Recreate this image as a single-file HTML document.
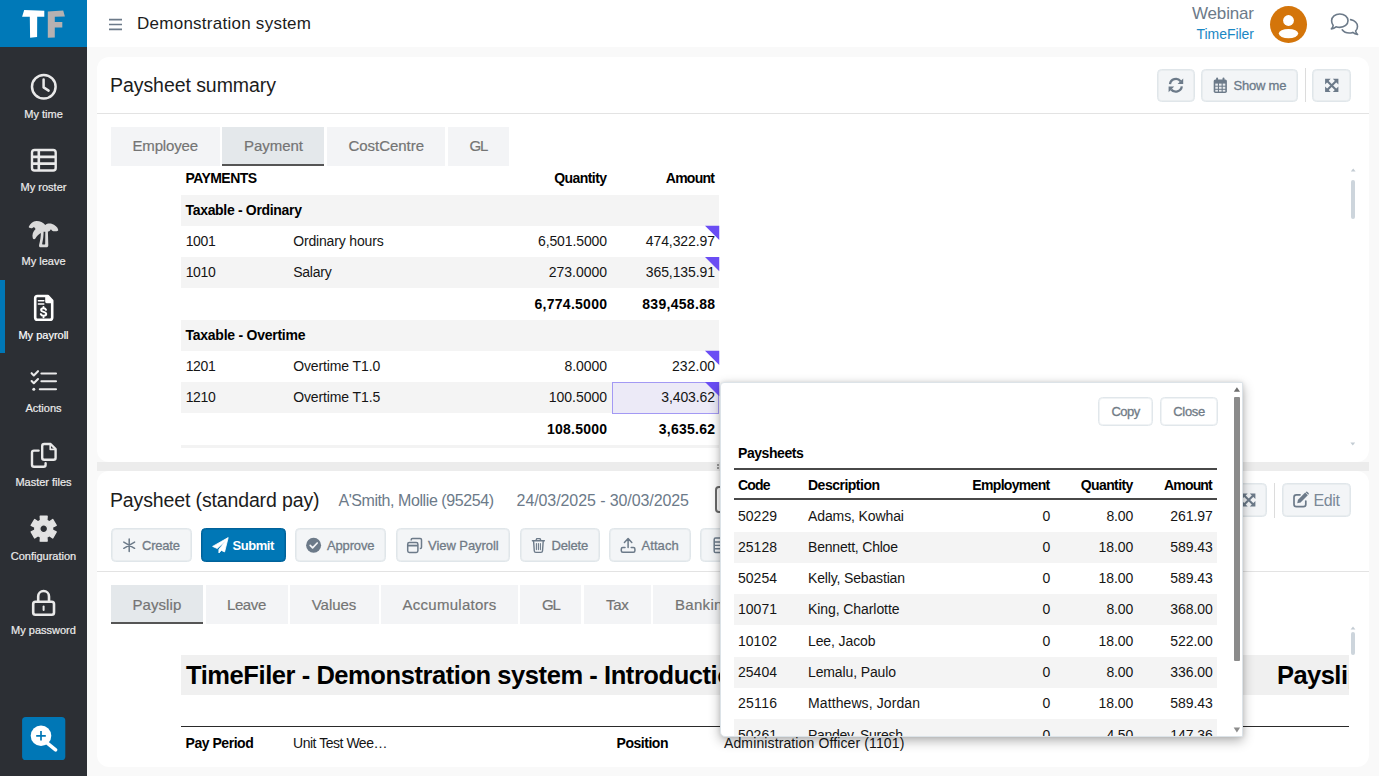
<!DOCTYPE html>
<html>
<head>
<meta charset="utf-8">
<title>TimeFiler</title>
<style>
*{box-sizing:border-box;margin:0;padding:0}
html,body{width:1379px;height:776px;overflow:hidden;background:#f9f9f9;font-family:"Liberation Sans",sans-serif;color:#111}
.abs{position:absolute}
.t{position:absolute;white-space:nowrap;line-height:1}
#side{position:absolute;left:0;top:0;width:87px;height:776px;background:#2c2f34}
#logo{position:absolute;left:0;top:0;width:87px;height:47px;background:#0079b8}
.nl{position:absolute;left:0;width:87px;text-align:center;font-size:11px;line-height:12px;color:#ececec;white-space:nowrap;-webkit-text-stroke:0.2px currentColor}
#top{position:absolute;left:87px;top:0;width:1292px;height:47px;background:#fff}
.panel{position:absolute;background:#fff;border-radius:12px}
.tab{position:absolute;background:#f3f4f6;height:38.75px}
.tab.on{background:#e4e8eb;border-bottom:2px solid #555}
.btn{position:absolute;border:1px solid #e0e6ea;background:#f3f5f7;border-radius:4.5px;box-shadow:inset 0 0 0 1px rgba(224,230,234,.55)}
.btn.pri{background:#0077b6;border-color:#00629a;box-shadow:inset 0 0 0 1px rgba(0,98,154,.5)}
</style>
</head>
<body>
<div id="side">
 <div id="logo"></div>
 <div class="abs" style="left:0;top:279.5px;width:5.3px;height:73px;background:#0077b6"></div>
 <svg class="abs" style="left:0;top:0" width="87" height="776" viewBox="0 0 87 776">
  <!-- TF logo -->
  <path d="M24.2 9.9 L44.3 10.8 L44.3 16.7 L37.2 16.7 L37.1 37.1 L30.1 37.8 L29.8 16.7 L22.1 16.7 Z" fill="#fff"/>
  <path d="M47.8 11.4 L63.2 10.5 L64.9 16.6 L54.8 16.7 L54.8 22 L62.3 22 L62.3 27.5 L54.8 27.5 L54.8 37.4 L47.8 37.7 Z" fill="#b6b1b1"/>
  <!-- clock -->
  <g fill="none" stroke="#e9e9e9" stroke-width="2.5" stroke-linecap="round" stroke-linejoin="round">
   <circle cx="43.8" cy="86.8" r="11.8"/>
   <path d="M43.6 79.6 V87.4 L48.6 90.6"/>
  </g>
  <!-- table list -->
  <g fill="none" stroke="#e9e9e9" stroke-width="2.4" stroke-linejoin="round">
   <rect x="32" y="150" width="23.7" height="20.5" rx="2.6"/>
   <path d="M32 156.9 H55.7 M32 163.6 H55.7 M38.8 150 V170.5" stroke-width="2.6"/>
  </g>
  <!-- palm -->
  <path fill="#dadada" fill-rule="evenodd" d="M28.9 226.6 C30.2 223.6 33 221.2 36.2 221 C39.6 220.8 43 222.4 45.3 224.9 C47 223.6 49.4 223.2 51.6 223.8 C55 224.8 57.6 227.2 58.2 229.8 C58.4 230.8 57.6 231.2 56.6 231.2 L53.4 231.2 C52.4 231.2 52 230.6 51.6 230 L50.9 229.2 L50 230.4 C49.4 231.2 48.8 231.5 47.9 231.5 L48.3 244.9 C48.4 246.4 47.6 247.3 46.2 247.3 L40.8 247.3 C39.4 247.3 38.8 246.2 39.1 244.9 C40.2 240.6 40.8 236.8 40.9 233 C38.8 234 36.8 236 35.4 238.4 C34.8 239.4 33.2 239.4 32.8 238.2 C31.8 235 33 231.2 35.6 229 L34 227 L32.4 228 C31.8 228.4 31 228.2 30.4 228 L29.4 227.8 C28.8 227.6 28.6 227.2 28.9 226.6 Z M43.6 231.8 C43.6 236 43 240 42.2 243.6 C42.1 244.2 42.4 244.6 43 244.6 L44.4 244.6 C45 244.6 45.2 244.2 45.2 243.6 L45.3 231.8 Z"/>
  <!-- file invoice dollar -->
  <path d="M37.4 296 H47.8 L52.2 300.6 V317.4 Q52.2 319.7 49.9 319.7 H37.4 Q35.2 319.7 35.2 317.4 V298.3 Q35.2 296 37.4 296 Z" fill="none" stroke="#fff" stroke-width="2.6" stroke-linejoin="round"/>
  <path d="M45.2 296 H48 L52.2 300.4 V303.2 H46.6 Q45.2 303.2 45.2 301.8 Z" fill="#fff"/>
  <path d="M38.4 300.7 H43.8 M38.4 304 H43.8" stroke="#fff" stroke-width="1.5" fill="none" stroke-linecap="round"/>
  <path d="M46 309.8 C45.6 308.8 44.7 308.3 43.5 308.3 C42.1 308.3 41.1 309 41.1 310.1 C41.1 312.5 46.2 311.3 46.2 314 C46.2 315.1 45.1 315.8 43.6 315.8 C42.2 315.8 41.2 315.2 40.8 314.1 M43.5 306.9 V308.3 M43.5 315.8 V317.2" stroke="#fff" stroke-width="2" fill="none" stroke-linecap="round"/>
  <!-- list check -->
  <g fill="none" stroke="#e9e9e9" stroke-width="2.1" stroke-linecap="round" stroke-linejoin="round">
   <path d="M41.4 373.5 H56 M41.4 381.3 H56 M39.8 389.2 H56"/>
   <path d="M31.6 373.2 L33.8 375.4 L38 371.2 M31.6 381 L33.8 383.2 L38 379"/>
  </g>
  <circle cx="33.8" cy="389.2" r="1.5" fill="#e9e9e9"/>
  <!-- copy -->
  <g fill="none" stroke="#e9e9e9" stroke-width="2.4" stroke-linejoin="round" stroke-linecap="round">
   <path d="M44.2 444 H50.6 L55.6 449 V457.8 Q55.6 459.8 53.6 459.8 H44.2 Q42.2 459.8 42.2 457.8 V446 Q42.2 444 44.2 444 Z"/>
   <path d="M50.2 444.4 V449.4 H55.2" stroke-width="1.6"/>
   <path d="M45.6 463.2 V464.8 Q45.6 466.8 43.6 466.8 H34 Q32 466.8 32 464.8 V452.6 Q32 450.6 34 450.6 H38.6"/>
  </g>
  <!-- gear -->
  <path fill="#e2e2e2" fill-rule="evenodd" stroke="#e2e2e2" stroke-width="1.4" stroke-linejoin="round" d="M40.53 520.28 L40.26 516.27 L47.14 516.27 L46.87 520.28 L49.41 521.74 L52.75 519.50 L56.19 525.46 L52.58 527.23 L52.58 530.17 L56.19 531.94 L52.75 537.90 L49.41 535.66 L46.87 537.12 L47.14 541.13 L40.26 541.13 L40.53 537.12 L37.99 535.66 L34.65 537.90 L31.21 531.94 L34.82 530.17 L34.82 527.23 L31.21 525.46 L34.65 519.50 L37.99 521.74 Z M39.80 528.70 a3.90 3.90 0 1 0 7.80 0 a3.90 3.90 0 1 0 -7.80 0 Z"/>
  <!-- lock -->
  <g fill="none" stroke="#e9e9e9" stroke-width="2.6" stroke-linejoin="round" stroke-linecap="round">
   <rect x="33.2" y="601.8" width="20.8" height="13" rx="2.2"/>
   <path d="M38.2 601.4 V596.4 A5.4 5.4 0 0 1 49 596.4 V601.4"/>
  </g>
  <path d="M43.6 606.6 V610" stroke="#e9e9e9" stroke-width="2" stroke-linecap="round"/>
  <!-- zoom button -->
  <rect x="22.1" y="716.9" width="43.2" height="43.1" rx="3.6" fill="#0077b6"/>
  <circle cx="41" cy="735.8" r="10.3" fill="#fff"/>
  <path d="M47.3 743.2 L55.6 749.8" stroke="#fff" stroke-width="3.6" stroke-linecap="round"/>
  <path d="M36.2 735.8 H45.8 M41 731 V740.6" stroke="#0077b6" stroke-width="1.7"/>
 </svg>
 <div class="nl" style="top:107.5px">My time</div>
 <div class="nl" style="top:181.3px">My roster</div>
 <div class="nl" style="top:255px">My leave</div>
 <div class="nl" style="top:328.8px;color:#fff">My payroll</div>
 <div class="nl" style="top:402.4px">Actions</div>
 <div class="nl" style="top:476.2px">Master files</div>
 <div class="nl" style="top:549.8px">Configuration</div>
 <div class="nl" style="top:623.6px">My password</div>
</div>
<div id="top"></div>
<svg class="abs" style="left:105px;top:14px" width="22" height="20" viewBox="105 14 22 20"><path d="M109 19.6 H122 M109 24.5 H122 M109 29.4 H122" stroke="#6c7a89" stroke-width="1.7" fill="none"/></svg>
<div class="t" id="t1" style="font-size:17px;top:15px;color:#1c1c1c;letter-spacing:0.257px;left:137.00px;">Demonstration system</div>
<div class="t" id="t2" style="font-size:17px;top:5px;color:#6c7a89;letter-spacing:-0.167px;right:125.17px;">Webinar</div>
<div class="t" id="t3" style="font-size:14px;top:27px;color:#1a87c4;letter-spacing:-0.027px;right:125.03px;">TimeFiler</div>
<svg class="abs" style="left:1265px;top:2px" width="110" height="44" viewBox="1265 2 110 44">
 <circle cx="1288.5" cy="24.5" r="18.5" fill="#d4750a"/>
 <circle cx="1288.5" cy="20.5" r="5.4" fill="#fff"/>
 <ellipse cx="1288.5" cy="33.6" rx="9.7" ry="4.7" fill="#fff"/>
 <g fill="none" stroke="#6c7a89" stroke-width="1.6" stroke-linejoin="round" stroke-linecap="round">
  <path d="M1339.8 14 C1344.4 14 1348 17 1348 20.7 C1348 24.4 1344.4 27.4 1339.8 27.4 C1338.4 27.4 1337.2 27.2 1336 26.8 C1334.8 27.9 1333.2 28.7 1331.4 28.9 C1332.4 27.9 1333 26.7 1333.2 25.4 C1332.2 24.1 1331.6 22.5 1331.6 20.7 C1331.6 17 1335.2 14 1339.8 14 Z"/>
  <path d="M1350.6 19.6 C1354.6 20.4 1357.5 23.2 1357.5 26.4 C1357.5 28.2 1356.8 29.8 1355.6 31 C1355.8 32.3 1356.5 33.5 1357.6 34.5 C1355.6 34.3 1354 33.5 1352.8 32.4 C1351.6 32.8 1350.4 33 1349.2 33 C1346.2 33 1343.6 31.7 1342.2 29.8"/>
 </g>
</svg>
<div class="panel" style="left:97px;top:57px;width:1272px;height:405px"></div>
<div class="t" id="t4" style="font-size:19.5px;top:76px;color:#1c1c1c;letter-spacing:-0.060px;left:110.00px;">Paysheet summary</div>
<div class="abs" style="left:97.00px;top:113.00px;width:1272.00px;height:1.00px;background:#e3e3e3;"></div>
<div class="btn" style="left:1157px;top:68.5px;width:37.5px;height:33px"></div>
<div class="btn" style="left:1201px;top:68.5px;width:96.7px;height:33px"></div>
<div class="abs" style="left:1305.00px;top:68.00px;width:1.00px;height:34.00px;background:#dcdcdc;"></div>
<div class="btn" style="left:1312px;top:68.5px;width:38.7px;height:33px"></div>
<div class="t" id="t5" style="font-size:13px;top:79px;color:#6c7a89;-webkit-text-stroke:0.3px #6c7a89;letter-spacing:-0.234px;left:1233.60px;">Show me</div>
<svg class="abs" style="left:1157px;top:68px" width="200" height="34" viewBox="1157 68 200 34">
 <!-- refresh -->
 <g fill="none" stroke="#6c7a89" stroke-width="2.3">
  <path d="M1170 84.2 A6 6 0 0 1 1180.6 81.2"/>
  <path d="M1181.8 86.4 A6 6 0 0 1 1171.2 89.4"/>
 </g>
 <path d="M1183.2 78.4 V84 H1177.6 Z M1168.6 92.2 V86.6 H1174.2 Z" fill="#6c7a89"/>
 <!-- calendar -->
 <path d="M1215.4 79.4 H1225.2 Q1226.9 79.4 1226.9 81.1 V91.2 Q1226.9 92.9 1225.2 92.9 H1215.4 Q1213.7 92.9 1213.7 91.2 V81.1 Q1213.7 79.4 1215.4 79.4 Z" fill="#6c7a89"/>
 <path d="M1217.1 78.5 V80.4 M1223.5 78.5 V80.4" stroke="#6c7a89" stroke-width="2" stroke-linecap="round"/>
 <g fill="#e9ecef">
  <rect x="1215.3" y="83.6" width="2.6" height="2.1"/><rect x="1219" y="83.6" width="2.6" height="2.1"/><rect x="1222.7" y="83.6" width="2.6" height="2.1"/>
  <rect x="1215.3" y="86.7" width="2.6" height="2.1"/><rect x="1219" y="86.7" width="2.6" height="2.1"/><rect x="1222.7" y="86.7" width="2.6" height="2.1"/>
  <rect x="1215.3" y="89.8" width="2.6" height="1.8"/><rect x="1219" y="89.8" width="2.6" height="1.8"/><rect x="1222.7" y="89.8" width="2.6" height="1.8"/>
 </g>
 <!-- expand -->
 <g stroke="#6c7a89" stroke-width="2.1" fill="none">
  <path d="M1327.2 80.9 L1336.2 89.9 M1336.2 80.9 L1327.2 89.9"/>
 </g>
 <path d="M1325.1 78.8 H1330.7 L1325.1 84.4 Z M1338.4 78.8 V84.4 L1332.8 78.8 Z M1325.1 92 V86.4 L1330.7 92 Z M1338.4 92 H1332.8 L1338.4 86.4 Z" fill="#6c7a89"/>
</svg>
<div class="tab" style="left:111.00px;top:127.00px;width:109.00px"></div>
<div class="t" id="t6" style="font-size:15px;top:138px;color:#747474;letter-spacing:-0.172px;left:132.50px;-webkit-text-stroke:0.2px #747474;">Employee</div>
<div class="tab on" style="left:222.00px;top:127.00px;width:102.25px"></div>
<div class="t" id="t7" style="font-size:15px;top:138px;color:#747474;letter-spacing:-0.034px;left:244.00px;-webkit-text-stroke:0.2px #747474;">Payment</div>
<div class="tab" style="left:326.50px;top:127.00px;width:118.50px"></div>
<div class="t" id="t8" style="font-size:15px;top:138px;color:#747474;letter-spacing:-0.042px;left:348.50px;-webkit-text-stroke:0.2px #747474;">CostCentre</div>
<div class="tab" style="left:447.50px;top:127.00px;width:61.75px"></div>
<div class="t" id="t9" style="font-size:15px;top:138px;color:#747474;letter-spacing:-1.200px;left:469.50px;-webkit-text-stroke:0.2px #747474;">GL</div>
<div class="abs" style="left:181.00px;top:194.50px;width:538.25px;height:31.25px;background:#f4f4f4;"></div>
<div class="abs" style="left:181.00px;top:257.00px;width:538.25px;height:31.25px;background:#f4f4f4;"></div>
<div class="abs" style="left:181.00px;top:319.50px;width:538.25px;height:31.25px;background:#f4f4f4;"></div>
<div class="abs" style="left:181.00px;top:382.00px;width:538.25px;height:31.25px;background:#f4f4f4;"></div>
<div class="abs" style="left:181.00px;top:445.00px;width:538.25px;height:3.00px;background:#f3f3f3;"></div>
<div class="abs" style="left:611.75px;top:382.25px;width:107.50px;height:31.50px;background:#eceaf7;border:1px solid #a399f4;"></div>
<svg class="abs" style="left:0;top:0" width="1379" height="776" viewBox="0 0 1379 776"><g fill="#6a4df4"><path d="M705 225.75 H719.25 V240.00 Z"/><path d="M705 257.00 H719.25 V271.25 Z"/><path d="M705 350.75 H719.25 V365.00 Z"/><path d="M705 382.00 H719.25 V396.25 Z"/></g></svg>
<div class="t" id="t10" style="font-size:14px;top:171px;color:#000;font-weight:bold;letter-spacing:-0.567px;left:185.50px;">PAYMENTS</div>
<div class="t" id="t11" style="font-size:14px;top:171px;color:#000;font-weight:bold;letter-spacing:-0.576px;right:772.58px;">Quantity</div>
<div class="t" id="t12" style="font-size:14px;top:171px;color:#000;font-weight:bold;letter-spacing:-0.728px;right:664.73px;">Amount</div>
<div class="t" id="t13" style="font-size:14px;top:203px;color:#000;font-weight:bold;letter-spacing:-0.318px;left:185.50px;">Taxable - Ordinary</div>
<div class="t" id="t14" style="font-size:14px;top:234px;color:#151515;letter-spacing:-0.385px;left:185.70px;">1001</div>
<div class="t" id="t15" style="font-size:14px;top:234px;color:#151515;letter-spacing:-0.161px;left:293.20px;">Ordinary hours</div>
<div class="t" id="t16" style="font-size:14px;top:234px;color:#151515;letter-spacing:-0.120px;right:772.12px;">6,501.5000</div>
<div class="t" id="t17" style="font-size:14px;top:234px;color:#151515;letter-spacing:-0.092px;right:664.09px;">474,322.97</div>
<div class="t" id="t18" style="font-size:14px;top:265px;color:#151515;letter-spacing:-0.385px;left:185.70px;">1010</div>
<div class="t" id="t19" style="font-size:14px;top:265px;color:#151515;letter-spacing:-0.237px;left:293.20px;">Salary</div>
<div class="t" id="t20" style="font-size:14px;top:265px;color:#151515;letter-spacing:-0.022px;right:772.02px;">273.0000</div>
<div class="t" id="t21" style="font-size:14px;top:265px;color:#151515;letter-spacing:-0.092px;right:664.09px;">365,135.91</div>
<div class="t" id="t22" style="font-size:14px;top:297px;color:#000;font-weight:bold;letter-spacing:0.269px;right:771.73px;">6,774.5000</div>
<div class="t" id="t23" style="font-size:14px;top:297px;color:#000;font-weight:bold;letter-spacing:0.297px;right:663.70px;">839,458.88</div>
<div class="t" id="t24" style="font-size:14px;top:328px;color:#000;font-weight:bold;letter-spacing:-0.250px;left:185.50px;">Taxable - Overtime</div>
<div class="t" id="t25" style="font-size:14px;top:359px;color:#151515;letter-spacing:-0.385px;left:185.70px;">1201</div>
<div class="t" id="t26" style="font-size:14px;top:359px;color:#151515;letter-spacing:-0.120px;left:293.20px;">Overtime T1.0</div>
<div class="t" id="t27" style="font-size:14px;top:359px;color:#151515;letter-spacing:-0.066px;right:772.07px;">8.0000</div>
<div class="t" id="t28" style="font-size:14px;top:359px;color:#151515;letter-spacing:0.034px;right:663.97px;">232.00</div>
<div class="t" id="t29" style="font-size:14px;top:390px;color:#151515;letter-spacing:-0.385px;left:185.70px;">1210</div>
<div class="t" id="t30" style="font-size:14px;top:390px;color:#151515;letter-spacing:-0.120px;left:293.20px;">Overtime T1.5</div>
<div class="t" id="t31" style="font-size:14px;top:390px;color:#151515;letter-spacing:-0.022px;right:772.02px;">100.5000</div>
<div class="t" id="t32" style="font-size:14px;top:390px;color:#151515;letter-spacing:-0.107px;right:664.11px;">3,403.62</div>
<div class="t" id="t33" style="font-size:14px;top:422px;color:#000;font-weight:bold;letter-spacing:0.228px;right:771.77px;">108.5000</div>
<div class="t" id="t34" style="font-size:14px;top:422px;color:#000;font-weight:bold;letter-spacing:0.250px;right:663.75px;">3,635.62</div>
<div class="abs" style="left:1351.00px;top:180.00px;width:4.00px;height:39.00px;background:#cdd5dc;border-radius:2px;"></div>
<svg class="abs" style="left:1348px;top:166px" width="10" height="284" viewBox="1348 166 10 284"><path d="M1350.8 171.6 L1353.2 168.6 L1355.6 171.6 Z M1350.4 442.4 L1352.8 445.6 L1355.2 442.4 Z" fill="#c3ccd3"/></svg>
<div class="abs" style="left:97.00px;top:462.00px;width:1272.00px;height:8.75px;background:#ececec;"></div>
<div class="abs" style="left:717.00px;top:464.00px;width:2.00px;height:1.50px;background:#9a9a9a;"></div>
<div class="abs" style="left:717.00px;top:467.00px;width:2.00px;height:1.50px;background:#9a9a9a;"></div>
<div class="panel" style="left:97px;top:470.75px;width:1272px;height:296.4px"></div>
<div class="t" id="t35" style="font-size:19.5px;top:491px;color:#1c1c1c;letter-spacing:-0.134px;left:110.00px;">Paysheet (standard pay)</div>
<div class="t" id="t36" style="font-size:16px;top:493px;color:#6c7a89;letter-spacing:-0.423px;left:338.40px;">A&#x27;Smith, Mollie (95254)</div>
<div class="t" id="t37" style="font-size:16px;top:493px;color:#6c7a89;letter-spacing:-0.090px;left:516.60px;">24/03/2025 - 30/03/2025</div>
<div class="abs" style="left:714.5px;top:486px;width:30px;height:27px;border:2px solid #6a6a6a;border-radius:4px"></div>
<div class="btn" style="left:110.50px;top:528.25px;width:81.25px;height:33.75px"></div>
<div class="btn pri" style="left:201.00px;top:528.25px;width:84.75px;height:33.75px"></div>
<div class="btn" style="left:294.50px;top:528.25px;width:91.75px;height:33.75px"></div>
<div class="btn" style="left:395.50px;top:528.25px;width:114.50px;height:33.75px"></div>
<div class="btn" style="left:519.80px;top:528.25px;width:80.20px;height:33.75px"></div>
<div class="btn" style="left:608.80px;top:528.25px;width:81.80px;height:33.75px"></div>
<div class="btn" style="left:699.50px;top:528.25px;width:80.50px;height:33.75px"></div>
<div class="btn" style="left:1230.00px;top:483.00px;width:36.50px;height:33.75px"></div>
<div class="abs" style="left:1274.00px;top:482.50px;width:1.00px;height:35.00px;background:#dcdcdc;"></div>
<div class="btn" style="left:1281.50px;top:483.00px;width:69.00px;height:33.75px"></div>
<div class="t" id="t38" style="font-size:13px;top:539px;color:#717b86;-webkit-text-stroke:0.3px #717b86;letter-spacing:-0.206px;left:142.00px;">Create</div>
<div class="t" id="t39" style="font-size:13px;top:539px;color:#fff;font-weight:bold;letter-spacing:-0.463px;left:232.50px;">Submit</div>
<div class="t" id="t40" style="font-size:13px;top:539px;color:#717b86;-webkit-text-stroke:0.3px #717b86;letter-spacing:-0.154px;left:327.00px;">Approve</div>
<div class="t" id="t41" style="font-size:13px;top:539px;color:#717b86;-webkit-text-stroke:0.3px #717b86;letter-spacing:-0.054px;left:428.00px;">View Payroll</div>
<div class="t" id="t42" style="font-size:13px;top:539px;color:#717b86;-webkit-text-stroke:0.3px #717b86;letter-spacing:-0.176px;left:551.50px;">Delete</div>
<div class="t" id="t43" style="font-size:13px;top:539px;color:#717b86;-webkit-text-stroke:0.3px #717b86;letter-spacing:0.068px;left:641.50px;">Attach</div>
<div class="t" id="t44" style="font-size:16px;top:493px;color:#7b8997;letter-spacing:-0.359px;left:1313.50px;">Edit</div>
<svg class="abs" style="left:100px;top:480px" width="1270" height="90" viewBox="100 480 1270 90">
 <!-- asterisk -->
 <g stroke="#6c7a89" stroke-width="1.5" stroke-linecap="round" fill="none">
  <path d="M129.2 539 V551.4 M123.8 542.1 L134.6 548.3 M134.6 542.1 L123.8 548.3"/>
 </g>
 <!-- paper plane -->
 <path d="M228.2 537.6 L212.6 546.4 L217.2 548.5 L225.6 540.6 L218.9 549.4 L218.9 553 L221.4 550.4 L224.6 551.9 Z" fill="#fff" stroke="#fff" stroke-width="0.8" stroke-linejoin="round"/>
 <!-- circle check -->
 <circle cx="313.6" cy="545.2" r="7.5" fill="#6c7a89"/>
 <path d="M310.2 545.4 L312.6 547.8 L317.2 543" stroke="#f3f4f6" stroke-width="1.7" fill="none" stroke-linecap="round" stroke-linejoin="round"/>
 <!-- window restore -->
 <g fill="none" stroke="#6c7a89" stroke-width="1.5" stroke-linejoin="round">
  <rect x="407.7" y="542.6" width="10.2" height="9.8" rx="1.6"/>
  <path d="M407.7 545.6 H417.9" stroke-width="1.8"/>
  <path d="M411.2 540.4 V539.8 Q411.2 538.5 412.5 538.5 H420.2 Q421.5 538.5 421.5 539.8 V547.2 Q421.5 548.5 420.2 548.5 H419.8"/>
 </g>
 <!-- trash -->
 <g fill="none" stroke="#6c7a89" stroke-width="1.4" stroke-linejoin="round" stroke-linecap="round">
  <path d="M533.6 541.2 L534.3 551 Q534.4 552.4 535.8 552.4 H541 Q542.4 552.4 542.5 551 L543.2 541.2"/>
  <path d="M532.4 540.8 H544.4 M536 540.6 L536.8 538.6 H540 L540.8 540.6"/>
  <path d="M536.4 543.6 V549.6 M538.4 543.6 V549.6 M540.4 543.6 V549.6" stroke-width="1.1"/>
 </g>
 <!-- upload -->
 <g fill="none" stroke="#6c7a89" stroke-width="1.5" stroke-linejoin="round" stroke-linecap="round">
  <path d="M628.1 538.8 V547.6 M624.4 542.4 L628.1 538.6 L631.8 542.4"/>
  <path d="M625 547.4 H622.8 Q621.3 547.4 621.3 548.9 V550.7 Q621.3 552.2 622.8 552.2 H633.4 Q634.9 552.2 634.9 550.7 V548.9 Q634.9 547.4 633.4 547.4 H631.2"/>
 </g>
 <!-- calculator (mostly hidden) -->
 <g fill="none" stroke="#6c7a89" stroke-width="1.5">
  <rect x="714.2" y="538" width="11" height="14.6" rx="1.4"/>
  <path d="M714.2 542 H725 M714.2 545.4 H725 M714.2 548.8 H725" stroke-width="1.4"/>
 </g>
 <!-- expand (panel 2) -->
 <g stroke="#6c7a89" stroke-width="2.1" fill="none">
  <path d="M1244.2 495.5 L1253.2 504.5 M1253.2 495.5 L1244.2 504.5"/>
 </g>
 <path d="M1242.1 493.4 H1247.7 L1242.1 499 Z M1255.4 493.4 V499 L1249.8 493.4 Z M1242.1 506.6 V501 L1247.7 506.6 Z M1255.4 506.6 H1249.8 L1255.4 501 Z" fill="#6c7a89"/>
 <!-- pen to square -->
 <g fill="none" stroke="#6c7a89" stroke-width="1.7" stroke-linejoin="round" stroke-linecap="round">
  <path d="M1300 494.8 H1296.4 Q1294 494.8 1294 497.2 V504.2 Q1294 506.6 1296.4 506.6 H1303.4 Q1305.8 506.6 1305.8 504.2 V501"/>
 </g>
 <path d="M1305.2 492.6 L1307.8 495.2 L1300.6 502.4 L1297.2 503.2 L1298 499.8 Z" fill="#6c7a89"/>
 <path d="M1305.9 492 Q1306.7 491.2 1307.5 492 L1308.5 493 Q1309.3 493.8 1308.5 494.6 L1308.3 494.8 L1305.7 492.2 Z" fill="#6c7a89"/>
</svg>
<div class="abs" style="left:97.00px;top:571.00px;width:1272.00px;height:1.00px;background:#e3e3e3;"></div>
<div class="tab on" style="left:111.00px;top:585.00px;width:92.00px"></div>
<div class="t" id="t45" style="font-size:15px;top:597px;color:#747474;letter-spacing:0.065px;left:132.50px;-webkit-text-stroke:0.2px #747474;">Payslip</div>
<div class="tab" style="left:205.50px;top:585.00px;width:82.00px"></div>
<div class="t" id="t46" style="font-size:15px;top:597px;color:#747474;letter-spacing:-0.406px;left:227.00px;-webkit-text-stroke:0.2px #747474;">Leave</div>
<div class="tab" style="left:290.00px;top:585.00px;width:88.75px"></div>
<div class="t" id="t47" style="font-size:15px;top:597px;color:#747474;letter-spacing:-0.053px;left:311.75px;-webkit-text-stroke:0.2px #747474;">Values</div>
<div class="tab" style="left:381.25px;top:585.00px;width:136.75px"></div>
<div class="t" id="t48" style="font-size:15px;top:597px;color:#747474;letter-spacing:0.266px;left:402.50px;-webkit-text-stroke:0.2px #747474;">Accumulators</div>
<div class="tab" style="left:520.40px;top:585.00px;width:60.60px"></div>
<div class="t" id="t49" style="font-size:15px;top:597px;color:#747474;letter-spacing:-1.200px;left:542.00px;-webkit-text-stroke:0.2px #747474;">GL</div>
<div class="tab" style="left:583.50px;top:585.00px;width:67.50px"></div>
<div class="t" id="t50" style="font-size:15px;top:597px;color:#747474;letter-spacing:-0.272px;left:606.00px;-webkit-text-stroke:0.2px #747474;">Tax</div>
<div class="tab" style="left:653.30px;top:585.00px;width:106.70px"></div>
<div class="t" id="t51" style="font-size:15px;top:597px;color:#747474;letter-spacing:0.297px;left:675.00px;-webkit-text-stroke:0.2px #747474;">Banking</div>
<div class="abs" style="left:181.00px;top:655.00px;width:1168.00px;height:39.50px;background:#f0f0f0;"></div>
<div class="t" id="t52" style="font-size:25.5px;top:663px;color:#000;font-weight:bold;letter-spacing:-0.432px;left:186.00px;">TimeFiler - Demonstration system - Introduction</div>
<div class="t" id="t53" style="font-size:25.5px;top:663px;color:#000;font-weight:bold;letter-spacing:-0.552px;left:1277.00px;width:72px;height:30px;overflow:hidden;">Payslip</div>
<div class="abs" style="left:181.00px;top:725.60px;width:1168.00px;height:1.40px;background:#2a2a2a;"></div>
<div class="t" id="t54" style="font-size:14px;top:736px;color:#000;font-weight:bold;letter-spacing:-0.458px;left:185.50px;">Pay Period</div>
<div class="t" id="t55" style="font-size:14px;top:736px;color:#151515;letter-spacing:-0.472px;left:293.00px;">Unit Test Wee…</div>
<div class="t" id="t56" style="font-size:14px;top:736px;color:#000;font-weight:bold;letter-spacing:-0.462px;left:616.50px;">Position</div>
<div class="t" id="t57" style="font-size:14px;top:736px;color:#151515;letter-spacing:0.122px;left:724.00px;">Administration Officer (1101)</div>
<div class="abs" style="left:1351.00px;top:632.00px;width:4.00px;height:23.00px;background:#cdd5dc;border-radius:2px;"></div>
<svg class="abs" style="left:1348px;top:620px" width="10" height="10" viewBox="1348 620 10 10"><path d="M1350.6 629.4 L1353 626.4 L1355.4 629.4 Z" fill="#c3ccd3"/></svg>
<div class="abs" style="left:720px;top:382px;width:523px;height:354.5px;background:#fff;border:1px solid #dce3e8;border-radius:4px 1px 1px 5px;box-shadow:0 4px 12px rgba(0,0,0,.30),0 0 4px rgba(0,0,0,.10);overflow:hidden">
</div>
<div class="abs" style="left:0;top:0;width:1379px;height:735.5px;overflow:hidden;pointer-events:none">
<div class="abs" style="left:1098.25px;top:397px;width:54.75px;height:29px;border:1px solid #e1e7eb;border-radius:4.5px;background:#fff;box-shadow:inset 0 0 0 1px rgba(225,231,235,.5)"></div>
<div class="abs" style="left:1160.25px;top:397px;width:58px;height:29px;border:1px solid #e1e7eb;border-radius:4.5px;background:#fff;box-shadow:inset 0 0 0 1px rgba(225,231,235,.5)"></div>
<div class="t" id="t58" style="font-size:13px;top:405px;color:#717b86;-webkit-text-stroke:0.3px #717b86;letter-spacing:-0.536px;left:1111.50px;">Copy</div>
<div class="t" id="t59" style="font-size:13px;top:405px;color:#717b86;-webkit-text-stroke:0.3px #717b86;letter-spacing:-0.312px;left:1173.25px;">Close</div>
<div class="t" id="t60" style="font-size:14px;top:446px;color:#000;font-weight:bold;letter-spacing:-0.441px;left:738.00px;">Paysheets</div>
<div class="abs" style="left:733.60px;top:468.00px;width:483.70px;height:2.00px;background:#484848;"></div>
<div class="abs" style="left:733.60px;top:498.00px;width:483.70px;height:2.00px;background:#484848;"></div>
<div class="t" id="t61" style="font-size:14px;top:478px;color:#000;font-weight:bold;letter-spacing:-0.833px;left:738.00px;">Code</div>
<div class="t" id="t62" style="font-size:14px;top:478px;color:#000;font-weight:bold;letter-spacing:-0.502px;left:808.00px;">Description</div>
<div class="t" id="t63" style="font-size:14px;top:478px;color:#000;font-weight:bold;letter-spacing:-0.680px;right:329.43px;">Employment</div>
<div class="t" id="t64" style="font-size:14px;top:478px;color:#000;font-weight:bold;letter-spacing:-0.612px;right:246.36px;">Quantity</div>
<div class="t" id="t65" style="font-size:14px;top:478px;color:#000;font-weight:bold;letter-spacing:-0.828px;right:167.08px;">Amount</div>
<div class="t" id="t66" style="font-size:14px;top:509px;color:#151515;letter-spacing:0.016px;left:738.00px;">50229</div>
<div class="t" id="t67" style="font-size:14px;top:509px;color:#151515;letter-spacing:-0.107px;left:808.00px;">Adams, Kowhai</div>
<div class="t" id="t68" style="font-size:14px;top:509px;color:#151515;right:328.75px;">0</div>
<div class="t" id="t69" style="font-size:14px;top:509px;color:#151515;letter-spacing:-0.123px;right:245.87px;">8.00</div>
<div class="t" id="t70" style="font-size:14px;top:509px;color:#151515;letter-spacing:-0.066px;right:166.32px;">261.97</div>
<div class="abs" style="left:733.75px;top:531.50px;width:483.50px;height:31.25px;background:#f4f4f4;"></div>
<div class="t" id="t71" style="font-size:14px;top:540px;color:#151515;letter-spacing:0.016px;left:738.00px;">25128</div>
<div class="t" id="t72" style="font-size:14px;top:540px;color:#151515;letter-spacing:-0.202px;left:808.00px;">Bennett, Chloe</div>
<div class="t" id="t73" style="font-size:14px;top:540px;color:#151515;right:328.75px;">0</div>
<div class="t" id="t74" style="font-size:14px;top:540px;color:#151515;letter-spacing:-0.087px;right:245.84px;">18.00</div>
<div class="t" id="t75" style="font-size:14px;top:540px;color:#151515;letter-spacing:-0.066px;right:166.32px;">589.43</div>
<div class="t" id="t76" style="font-size:14px;top:571px;color:#151515;letter-spacing:0.016px;left:738.00px;">50254</div>
<div class="t" id="t77" style="font-size:14px;top:571px;color:#151515;letter-spacing:-0.157px;left:808.00px;">Kelly, Sebastian</div>
<div class="t" id="t78" style="font-size:14px;top:571px;color:#151515;right:328.75px;">0</div>
<div class="t" id="t79" style="font-size:14px;top:571px;color:#151515;letter-spacing:-0.087px;right:245.84px;">18.00</div>
<div class="t" id="t80" style="font-size:14px;top:571px;color:#151515;letter-spacing:-0.066px;right:166.32px;">589.43</div>
<div class="abs" style="left:733.75px;top:594.00px;width:483.50px;height:31.25px;background:#f4f4f4;"></div>
<div class="t" id="t81" style="font-size:14px;top:602px;color:#151515;letter-spacing:0.016px;left:738.00px;">10071</div>
<div class="t" id="t82" style="font-size:14px;top:602px;color:#151515;letter-spacing:-0.079px;left:808.00px;">King, Charlotte</div>
<div class="t" id="t83" style="font-size:14px;top:602px;color:#151515;right:328.75px;">0</div>
<div class="t" id="t84" style="font-size:14px;top:602px;color:#151515;letter-spacing:-0.123px;right:245.87px;">8.00</div>
<div class="t" id="t85" style="font-size:14px;top:602px;color:#151515;letter-spacing:-0.066px;right:166.32px;">368.00</div>
<div class="t" id="t86" style="font-size:14px;top:634px;color:#151515;letter-spacing:0.016px;left:738.00px;">10102</div>
<div class="t" id="t87" style="font-size:14px;top:634px;color:#151515;letter-spacing:-0.111px;left:808.00px;">Lee, Jacob</div>
<div class="t" id="t88" style="font-size:14px;top:634px;color:#151515;right:328.75px;">0</div>
<div class="t" id="t89" style="font-size:14px;top:634px;color:#151515;letter-spacing:-0.087px;right:245.84px;">18.00</div>
<div class="t" id="t90" style="font-size:14px;top:634px;color:#151515;letter-spacing:-0.066px;right:166.32px;">522.00</div>
<div class="abs" style="left:733.75px;top:656.50px;width:483.50px;height:31.25px;background:#f4f4f4;"></div>
<div class="t" id="t91" style="font-size:14px;top:665px;color:#151515;letter-spacing:0.016px;left:738.00px;">25404</div>
<div class="t" id="t92" style="font-size:14px;top:665px;color:#151515;letter-spacing:-0.126px;left:808.00px;">Lemalu, Paulo</div>
<div class="t" id="t93" style="font-size:14px;top:665px;color:#151515;right:328.75px;">0</div>
<div class="t" id="t94" style="font-size:14px;top:665px;color:#151515;letter-spacing:-0.123px;right:245.87px;">8.00</div>
<div class="t" id="t95" style="font-size:14px;top:665px;color:#151515;letter-spacing:-0.066px;right:166.32px;">336.00</div>
<div class="t" id="t96" style="font-size:14px;top:696px;color:#151515;letter-spacing:0.273px;left:738.00px;">25116</div>
<div class="t" id="t97" style="font-size:14px;top:696px;color:#151515;letter-spacing:0.100px;left:808.00px;">Matthews, Jordan</div>
<div class="t" id="t98" style="font-size:14px;top:696px;color:#151515;right:328.75px;">0</div>
<div class="t" id="t99" style="font-size:14px;top:696px;color:#151515;letter-spacing:-0.087px;right:245.84px;">18.00</div>
<div class="t" id="t100" style="font-size:14px;top:696px;color:#151515;letter-spacing:-0.066px;right:166.32px;">589.43</div>
<div class="abs" style="left:733.75px;top:719.00px;width:483.50px;height:31.25px;background:#f4f4f4;"></div>
<div class="t" id="t101" style="font-size:14px;top:728px;color:#151515;letter-spacing:0.016px;left:738.00px;">50261</div>
<div class="t" id="t102" style="font-size:14px;top:728px;color:#151515;letter-spacing:-0.276px;left:808.00px;">Pandey, Suresh</div>
<div class="t" id="t103" style="font-size:14px;top:728px;color:#151515;right:328.75px;">0</div>
<div class="t" id="t104" style="font-size:14px;top:728px;color:#151515;letter-spacing:-0.123px;right:245.87px;">4.50</div>
<div class="t" id="t105" style="font-size:14px;top:728px;color:#151515;letter-spacing:-0.066px;right:166.32px;">147.36</div>
<div class="abs" style="left:1234.00px;top:396.75px;width:5.75px;height:264.50px;background:#8b8b8b;border-radius:1px;"></div>
<svg class="abs" style="left:1231px;top:384px" width="10" height="352" viewBox="1231 384 10 352"><path d="M1233.8 391.8 L1236.9 387.2 L1240 391.8 Z" fill="#6e6e6e"/><path d="M1233.7 727.6 L1236.9 732.6 L1240.1 727.6 Z" fill="#8c8c8c"/></svg>
</div>
</body>
</html>
